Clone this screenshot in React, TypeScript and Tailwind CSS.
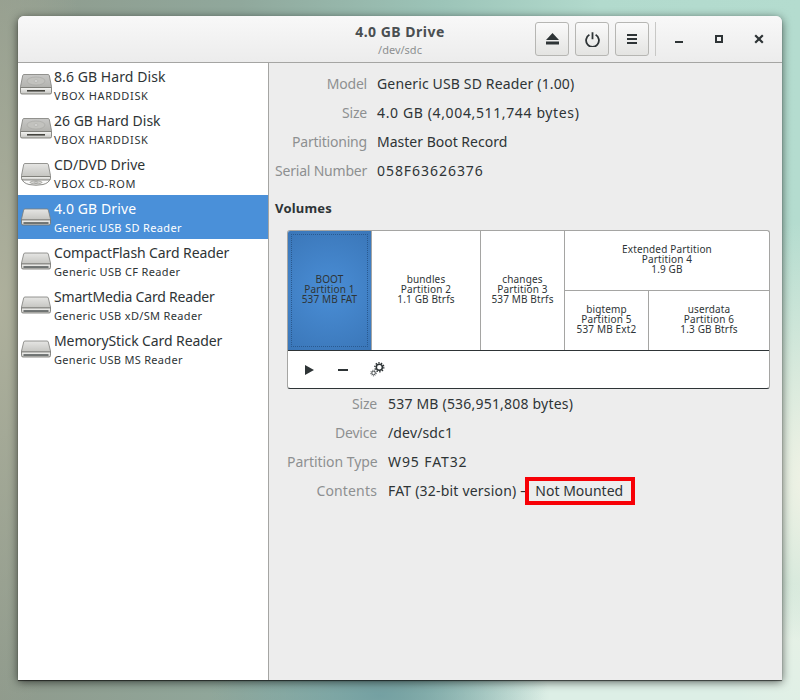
import React from "react";

const font = { fontFamily: '"Noto Sans", sans-serif' };

function DiskIcon({ kind, uid }: { kind: "hdd" | "cd" | "card"; uid: string }) {
  const top = kind === "hdd" ? 2.5 : kind === "cd" ? 3.5 : 5;
  const seam = kind === "hdd" ? 15.5 : kind === "cd" ? 16.5 : 16;
  const bottom = kind === "hdd" ? 22 : kind === "cd" ? 20 : 21;
  const inset = kind === "hdd" ? 1 : 2;
  return (
    <svg width="34" height="26" viewBox="0 0 34 26" className="shrink-0">
      <defs>
        <linearGradient id={`top-${uid}`} x1="0" y1="0" x2="0" y2="1">
          <stop offset="0" stopColor={kind === "hdd" ? "#c8c8c6" : "#e6e6e4"} />
          <stop offset="1" stopColor={kind === "hdd" ? "#b2b2ae" : "#c4c4c0"} />
        </linearGradient>
        <linearGradient id={`front-${uid}`} x1="0" y1="0" x2="0" y2="1">
          <stop offset="0" stopColor="#f6f6f4" />
          <stop offset="1" stopColor="#c4c4c0" />
        </linearGradient>
      </defs>
      {kind === "cd" ? (
        <path d="M3 19 Q4 23 10 24.5 Q17 26 24 24.5 Q30 23 31 19 Z" fill="#fafafa" stroke="#6e6e6a" strokeWidth="0.8" />
      ) : null}
      <path
        d={`M${inset + 4} ${top} H${30 - inset} Q${31 - inset} ${top} ${31.3 - inset} ${top + 1} L${34 - inset - 0.5} ${seam - 1} V${seam} H${inset + 0.5} V${seam - 1} L${inset + 2.7} ${top + 1} Q${inset + 3} ${top} ${inset + 4} ${top} Z`}
        fill={`url(#top-${uid})`}
        stroke="#7c7c78"
        strokeWidth="0.8"
      />
      <path
        d={`M${inset + 0.5} ${seam} H${33.5 - inset} V${bottom - 1.5} Q${33.5 - inset} ${bottom} ${32 - inset} ${bottom} H${inset + 2} Q${inset + 0.5} ${bottom} ${inset + 0.5} ${bottom - 1.5} Z`}
        fill={`url(#front-${uid})`}
        stroke="#6e6e6a"
        strokeWidth="0.8"
      />
      {kind === "hdd" ? (
        <>
          <ellipse cx="17" cy="9" rx="9" ry="4" fill="#c2c2be" stroke="#a6a6a2" strokeWidth="0.6" />
          <ellipse cx="17" cy="9" rx="2" ry="1" fill="#e8e8e6" stroke="#9a9a96" strokeWidth="0.5" />
          <rect x="8" y="18" width="18" height="1.6" fill="#45453f" />
        </>
      ) : null}
      {kind === "cd" ? (
        <>
          <ellipse cx="17" cy="22.4" rx="6" ry="1.5" fill="#d8d8d6" stroke="#77776f" strokeWidth="0.5" />
          <ellipse cx="17" cy="22.4" rx="1.8" ry="0.6" fill="#ffffff" stroke="#555550" strokeWidth="0.4" />
        </>
      ) : null}
      {kind === "card" ? <rect x="4.5" y="18.4" width="25" height="1.2" fill="#2e3436" /> : null}
    </svg>
  );
}

const drives: { title: string; sub: string; kind: "hdd" | "cd" | "card"; selected?: boolean; tt: string; ts: string }[] = [
  { title: "8.6 GB Hard Disk", sub: "VBOX HARDDISK", kind: "hdd", tt: "tracking-[0.07px]", ts: "tracking-[0.65px]" },
  { title: "26 GB Hard Disk", sub: "VBOX HARDDISK", kind: "hdd", tt: "tracking-[0px]", ts: "tracking-[0.65px]" },
  { title: "CD/DVD Drive", sub: "VBOX CD-ROM", kind: "cd", tt: "tracking-[0px]", ts: "tracking-[0.6px]" },
  { title: "4.0 GB Drive", sub: "Generic USB SD Reader", kind: "card", selected: true, tt: "tracking-[0.1px]", ts: "tracking-[0.35px]" },
  { title: "CompactFlash Card Reader", sub: "Generic USB CF Reader", kind: "card", tt: "tracking-[-0.1px]", ts: "tracking-[0.35px]" },
  { title: "SmartMedia Card Reader", sub: "Generic USB xD/SM Reader", kind: "card", tt: "tracking-[-0.2px]", ts: "tracking-[0.33px]" },
  { title: "MemoryStick Card Reader", sub: "Generic USB MS Reader", kind: "card", tt: "tracking-[-0.1px]", ts: "tracking-[0.3px]" },
];

function Row({ label, labelClass, vClass, children }: { label: string; labelClass: string; vClass: string; children: React.ReactNode }) {
  return (
    <div className="flex h-[29px] items-center text-[14px]">
      <div className={`${labelClass} whitespace-nowrap text-right text-[#8d9091]`}>{label}</div>
      <div className={`${vClass} whitespace-nowrap text-[#2e3436]`}>{children}</div>
    </div>
  );
}

function HeaderButton({ children }: { children: React.ReactNode }) {
  return (
    <div className="flex h-[34px] w-[34px] items-center justify-center rounded-[3px] border border-[#b6b6b3] bg-gradient-to-b from-[#fafafa] to-[#e4e4e2]">
      {children}
    </div>
  );
}

function Part({ lines, className }: { lines: string[]; className: string }) {
  return (
    <div className={`flex flex-col items-center justify-center pb-[3px] text-[10px] leading-[10px] tracking-[0.15px] text-[#2e3436] ${className}`}>
      {lines.map((l) => (
        <div key={l} className="whitespace-nowrap">{l}</div>
      ))}
    </div>
  );
}

export default function App() {
  return (
    <div
      style={font}
      className="h-[700px] w-[800px] overflow-hidden bg-[radial-gradient(ellipse_170px_70px_at_380px_695px,#74a0a2,transparent),radial-gradient(ellipse_130px_260px_at_810px_480px,#f2f3e6,transparent),radial-gradient(ellipse_320px_120px_at_720px_700px,#ddefe6_55%,transparent),radial-gradient(ellipse_110px_420px_at_0px_300px,#aeb09c,transparent),linear-gradient(90deg,#8f9a8c_0%,#90a89c_30%,#9cc4b8_55%,#b2dacd_75%,#b4dccf_100%)] pl-[18px] pt-[16px]"
    >
      <div className="flex h-[664px] w-[764px] flex-col overflow-hidden rounded-t-[6px] bg-[#ededed] shadow-[0_1px_1px_rgba(0,0,0,0.6),0_2px_10px_rgba(0,0,0,0.6)]">
        <div className="flex h-[47px] shrink-0 items-center border-b border-[#a5a5a3] bg-gradient-to-b from-[#f8f8f8] to-[#ececec]">
          <div className="relative flex-1 self-stretch">
            <div className="absolute left-[382px] top-[7px] w-[100px] -translate-x-1/2 text-center">
              <div className="text-[14px] font-bold leading-[17px] tracking-[0.5px] text-[#4a4f51]">4.0 GB Drive</div>
              <div className="mt-[2px] text-[11px] leading-[15px] tracking-[0px] text-[#8d9091]">/dev/sdc</div>
            </div>
          </div>
          <div className="flex items-center gap-[6px] pr-[6px]">
            <HeaderButton>
              <svg width="13" height="12" viewBox="0 0 13 12"><path d="M6.5 0 L13 7 H0 Z M0 8.5 H13 V11.5 H0 Z" fill="#2e3436" /></svg>
            </HeaderButton>
            <HeaderButton>
              <svg width="15" height="15" viewBox="0 0 15 15" fill="none" stroke="#2e3436" strokeWidth="1.8"><path d="M4.4 2.8 A6.4 6.4 0 1 0 10.6 2.8" /><path d="M7.5 0.3 V7.3" /></svg>
            </HeaderButton>
            <HeaderButton>
              <svg width="10" height="10" viewBox="0 0 10 10" fill="#2e3436"><rect x="0" y="0" width="10" height="2" /><rect x="0" y="4" width="10" height="2" /><rect x="0" y="8" width="10" height="2" /></svg>
            </HeaderButton>
          </div>
          <div className="mr-[3px] h-[34px] w-px bg-[#c8c8c6]" />
          <div className="flex items-center pr-[3px]">
            <div className="flex h-[34px] w-[40px] items-center justify-center">
              <svg width="10" height="10" viewBox="0 0 10 10"><rect x="1" y="7" width="8" height="2" fill="#2e3436" /></svg>
            </div>
            <div className="flex h-[34px] w-[40px] items-center justify-center">
              <svg width="10" height="10" viewBox="0 0 10 10" fill="none" stroke="#2e3436" strokeWidth="2"><rect x="2" y="2" width="6" height="6" /></svg>
            </div>
            <div className="flex h-[34px] w-[40px] items-center justify-center">
              <svg width="10" height="10" viewBox="0 0 10 10" stroke="#2e3436" strokeWidth="2.2"><path d="M1.2 1.2 L8.8 8.8 M8.8 1.2 L1.2 8.8" /></svg>
            </div>
          </div>
        </div>
        <div className="flex min-h-0 flex-1">
          <div className="w-[251px] shrink-0 border-r border-[#a5a5a3] bg-white">
            {drives.map((d, i) => (
              <div
                key={d.title}
                className={`flex h-[44px] items-center pl-[1px] ${d.selected ? "bg-[#4a90d9] text-white" : "text-[#2e3436]"}`}
              >
                <DiskIcon kind={d.kind} uid={`d${i}`} />
                <div className="ml-[1px] mt-[1px]">
                  <div className={`whitespace-nowrap text-[14px] leading-[20px] ${d.tt}`}>{d.title}</div>
                  <div className={`whitespace-nowrap text-[11px] leading-[17px] ${d.ts}`}>{d.sub}</div>
                </div>
              </div>
            ))}
          </div>
          <div className="flex-1 px-[6px] pt-[6px]">
            <Row label="Model" labelClass="w-[92px] tracking-[-0.2px]" vClass="ml-[10px] tracking-[0.15px]">Generic USB SD Reader (1.00)</Row>
            <Row label="Size" labelClass="w-[92px] tracking-[-0.2px]" vClass="ml-[10px] tracking-[0.63px]">4.0 GB (4,004,511,744 bytes)</Row>
            <Row label="Partitioning" labelClass="w-[92px] tracking-[-0.2px]" vClass="ml-[10px] tracking-[0px]">Master Boot Record</Row>
            <Row label="Serial Number" labelClass="w-[92px] tracking-[-0.2px]" vClass="ml-[10px] tracking-[0.95px]">058F63626376</Row>
            <div className="mt-[13px] text-[13px] font-bold leading-[20px] tracking-[0.2px] text-[#2e3436]">Volumes</div>
            <div className="ml-[12px] mt-[12px] w-[483px] overflow-hidden rounded-[3px] border border-[#2e3436] border-t-[#a5a5a3] border-l-[#a5a5a3] border-r-[#a5a5a3] bg-white">
              <div className="flex h-[120px] border-b border-[#2e3436]">
                <div className="flex w-[84px] shrink-0 border-r border-[#a5a5a3] bg-[radial-gradient(circle,#4a8ed6,#3a76b8)] p-[3px]">
                  <div className="flex flex-1 border border-dotted border-[#2a5a90]">
                    <Part lines={["BOOT", "Partition 1", "537 MB FAT"]} className="flex-1 pb-[1px]" />
                  </div>
                </div>
                <Part lines={["bundles", "Partition 2", "1.1 GB Btrfs"]} className="w-[109px] shrink-0 border-r border-[#a5a5a3]" />
                <Part lines={["changes", "Partition 3", "537 MB Btrfs"]} className="w-[84px] shrink-0 border-r border-[#a5a5a3]" />
                <div className="flex flex-1 flex-col">
                  <Part lines={["Extended Partition", "Partition 4", "1.9 GB"]} className="h-[60px] border-b border-[#a5a5a3]" />
                  <div className="flex flex-1">
                    <Part lines={["bigtemp", "Partition 5", "537 MB Ext2"]} className="w-[84px] border-r border-[#a5a5a3]" />
                    <Part lines={["userdata", "Partition 6", "1.3 GB Btrfs"]} className="flex-1" />
                  </div>
                </div>
              </div>
              <div className="flex h-[37px] items-center gap-[21px] pl-[16px]">
                <svg width="12" height="12" viewBox="0 0 12 12"><path d="M1 1 L10 6 L1 11 Z" fill="#2e3436" /></svg>
                <svg width="12" height="12" viewBox="0 0 12 12"><rect x="1" y="5" width="10" height="2" fill="#2e3436" /></svg>
                <svg width="16" height="16" viewBox="0 0 18 18" fill="none" stroke="#2e3436" className="mt-[-2px]">
                  <circle cx="10.5" cy="7" r="3.4" strokeWidth="1.7" />
                  <circle cx="10.5" cy="7" r="5" strokeWidth="1.6" strokeDasharray="1.6 1.5" />
                  <circle cx="4" cy="13.5" r="2" strokeWidth="1" />
                  <circle cx="4" cy="13.5" r="3.2" strokeWidth="0.9" strokeDasharray="1.1 1.1" />
                </svg>
              </div>
            </div>
            <div className="ml-[12px]">
              <Row label="Size" labelClass="w-[90px] tracking-[-0.2px]" vClass="ml-[11px] tracking-[0.2px]">537 MB (536,951,808 bytes)</Row>
              <Row label="Device" labelClass="w-[90px] tracking-[-0.2px]" vClass="ml-[11px] tracking-[0.15px]">/dev/sdc1</Row>
              <Row label="Partition Type" labelClass="w-[90px] tracking-[-0.05px]" vClass="ml-[11px] tracking-[0.9px]">W95 FAT32</Row>
              <Row label="Contents" labelClass="w-[90px] tracking-[0.15px]" vClass="ml-[11px] tracking-[0.2px]">
                FAT (32-bit version) –{" "}
                <span className="relative ml-[4px] tracking-[0px]">
                  Not Mounted
                  <span className="absolute left-[-10px] right-[-12px] top-[-4px] bottom-[-5px] border-4 border-[#f70006]" />
                </span>
              </Row>
            </div>
          </div>
        </div>
      </div>
    </div>
  );
}
